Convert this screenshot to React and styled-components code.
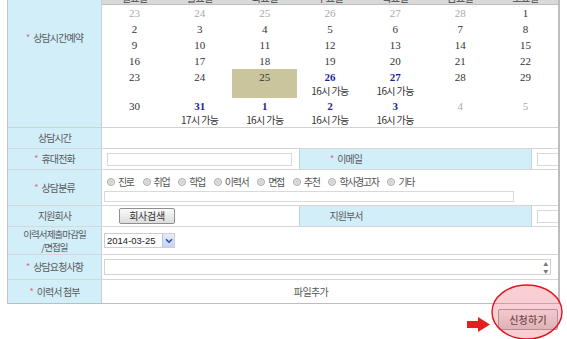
import styled, { createGlobalStyle } from 'styled-components'

const GlobalStyle = createGlobalStyle`
  html, body {
    margin: 0;
    padding: 0;
    background: #fff;
    overflow: hidden;
  }
  body {
    font-family: "Noto Sans CJK KR", "Noto Sans", sans-serif;
    color: #555;
  }
`

const days = ['일요일', '월요일', '화요일', '수요일', '목요일', '금요일', '토요일']

const weeks = [
  [{ d: 23, o: true }, { d: 24, o: true }, { d: 25, o: true }, { d: 26, o: true }, { d: 27, o: true }, { d: 28, o: true }, { d: 1 }],
  [{ d: 2 }, { d: 3 }, { d: 4 }, { d: 5 }, { d: 6 }, { d: 7 }, { d: 8 }],
  [{ d: 9 }, { d: 10 }, { d: 11 }, { d: 12 }, { d: 13 }, { d: 14 }, { d: 15 }],
  [{ d: 16 }, { d: 17 }, { d: 18 }, { d: 19 }, { d: 20 }, { d: 21 }, { d: 22 }],
  [{ d: 23 }, { d: 24 }, { d: 25, sel: true }, { d: 26, a: '16시 가능' }, { d: 27, a: '16시 가능' }, { d: 28 }, { d: 29 }],
  [{ d: 30 }, { d: 31, a: '17시 가능' }, { d: 1, a: '16시 가능' }, { d: 2, a: '16시 가능' }, { d: 3, a: '16시 가능' }, { d: 4, o: true }, { d: 5, o: true }],
]

const categories = ['진로', '취업', '학업', '이력서', '면접', '추천', '학사경고자', '기타']

function Req({ children }) {
  return (
    <>
      <Star>*</Star>
      {children}
    </>
  )
}

export default function App() {
  return (
    <>
      <GlobalStyle />
      <Page>
        <Frame>
          <CalendarRow>
            <Label $tall>
              <Req>상담시간예약</Req>
            </Label>
            <Calendar>
              {days.map((d) => (
                <DayHead key={d}>{d}</DayHead>
              ))}
              {weeks.flat().map((c, i) => (
                <DayCell key={i} $sel={c.sel}>
                  <DayNum $other={c.o} $avail={!!c.a}>{c.d}</DayNum>
                  {c.a && <Avail>{c.a}</Avail>}
                </DayCell>
              ))}
            </Calendar>
          </CalendarRow>

          <Row $h={21}>
            <Label>상담시간</Label>
            <Value $span />
          </Row>

          <Row $h={21}>
            <Label>
              <Req>휴대전화</Req>
            </Label>
            <Value>
              <TextInput $w={183} $ml={5} />
            </Value>
            <Label $side>
              <Req>이메일</Req>
            </Label>
            <Value $clip>
              <TextInput $w={60} $ml={5} />
            </Value>
          </Row>

          <Row $h={36}>
            <Label>
              <Req>상담분류</Req>
            </Label>
            <Value $span $stack>
              <Radios>
                {categories.map((c) => (
                  <RadioItem key={c}>
                    <RadioDot />
                    {c}
                  </RadioItem>
                ))}
              </Radios>
              <TextInput $w={408} $ml={2} $h={9} />
            </Value>
          </Row>

          <Row $h={21}>
            <Label>지원회사</Label>
            <Value>
              <GrayButton $ml={17}>회사검색</GrayButton>
            </Value>
            <Label $side>지원부서</Label>
            <Value $clip>
              <TextInput $w={60} $ml={5} />
            </Value>
          </Row>

          <Row $h={28}>
            <Label $lines>
              이력서제출마감일
              <br />
              /면접일
            </Label>
            <Value $span>
              <FakeSelect>
                <span>2014-03-25</span>
                <SelectArrow>
                  <svg width="8" height="6" viewBox="0 0 8 6">
                    <path d="M1 1.2 L4 4.2 L7 1.2" fill="none" stroke="#2b4c9c" strokeWidth="1.6" />
                  </svg>
                </SelectArrow>
              </FakeSelect>
            </Value>
          </Row>

          <Row $h={25}>
            <Label>
              <Req>상담요청사항</Req>
            </Label>
            <Value $span>
              <TextArea>
                <Spinner>
                  <span>▲</span>
                  <span>▼</span>
                </Spinner>
              </TextArea>
            </Value>
          </Row>

          <Row $h={23} $last>
            <Label>
              <Req>이력서 첨부</Req>
            </Label>
            <Value $span $center>
              파일추가
            </Value>
          </Row>
        </Frame>

        <Actions>
          <SubmitButton>신청하기</SubmitButton>
          <Annotation width="100" height="58" viewBox="0 0 100 58">
            <ellipse cx="62" cy="29" rx="35" ry="27" fill="rgba(236,110,122,0.33)" stroke="#e3121f" strokeWidth="1.4" />
            <polygon points="2,38 13,38 13,34 25,41.5 13,49 13,45 2,45" fill="#e3201f" />
          </Annotation>
        </Actions>
      </Page>
    </>
  )
}

const Page = styled.div`
  width: 567px;
  height: 350px;
  padding-left: 7px;
  margin-top: -11px;
  box-sizing: border-box;
`

const Frame = styled.div`
  width: 553px;
  box-sizing: border-box;
  border-left: 1px solid #c4c4c4;
  border-right: 2px solid #bdbdbd;
  border-bottom: 1px solid #bdbdbd;
  overflow: hidden;
`

const CalendarRow = styled.div`
  display: grid;
  grid-template-columns: 94px 1fr;
  border-bottom: 1px solid #d2d2d2;
`

const Row = styled.div`
  display: grid;
  grid-template-columns: 94px 197px 233px 1fr;
  box-sizing: border-box;
  height: ${(p) => p.$h}px;
  border-bottom: ${(p) => (p.$last ? 'none' : '1px solid #d6d6d6')};
`

const Label = styled.div`
  background: #d2eef9;
  border-right: 1px solid #c2d4db;
  border-left: ${(p) => (p.$side ? '1px solid #c2d4db' : 'none')};
  display: flex;
  align-items: center;
  justify-content: center;
  text-align: center;
  font-size: ${(p) => (p.$lines ? '9.5px' : '10px')};
  letter-spacing: -0.9px;
  line-height: ${(p) => (p.$lines ? '13px' : '12px')};
  color: #5a5a5a;
  padding-bottom: ${(p) => (p.$tall ? '41px' : '0')};
  padding-right: ${(p) => (p.$side ? '139px' : '0')};
  white-space: nowrap;
`

const Star = styled.span`
  color: #e0628c;
  margin-right: 4px;
  font-size: 9px;
`

const Value = styled.div`
  grid-column: ${(p) => (p.$span ? 'span 3' : 'auto')};
  display: flex;
  flex-direction: ${(p) => (p.$stack ? 'column' : 'row')};
  align-items: ${(p) => (p.$stack ? 'flex-start' : 'center')};
  justify-content: ${(p) => (p.$stack ? 'flex-start' : p.$center ? 'center' : 'flex-start')};
  gap: ${(p) => (p.$stack ? '3px' : '0')};
  overflow: ${(p) => (p.$clip ? 'hidden' : 'visible')};
  padding-top: ${(p) => (p.$stack ? '6px' : '0')};
  padding-right: ${(p) => (p.$center ? '38px' : '0')};
  font-size: 10px;
  letter-spacing: -0.6px;
  color: #555;
`

const Calendar = styled.div`
  display: grid;
  grid-template-columns: repeat(7, 1fr);
`

const DayHead = styled.div`
  height: 15px;
  display: flex;
  align-items: flex-end;
  justify-content: center;
  background: #d9d9d9;
  border-bottom: 1px solid #bdbdbd;
  font-size: 10px;
  line-height: 12px;
  color: #444;
  letter-spacing: -0.6px;
`

const DayCell = styled.div`
  background: ${(p) => (p.$sel ? '#cac59c' : '#fff')};
  padding: 1.5px 0;
  text-align: center;
  line-height: 13px;
`

const DayNum = styled.div`
  font-family: "Liberation Serif", "DejaVu Serif", serif;
  font-size: 11px;
  font-weight: ${(p) => (p.$avail ? 700 : 400)};
  color: ${(p) => (p.$avail ? '#1b1f9e' : p.$other ? '#a9a9a9' : '#333')};
`

const Avail = styled.div`
  font-size: 10px;
  letter-spacing: -0.6px;
  color: #333;
`

const TextInput = styled.div`
  width: ${(p) => p.$w}px;
  height: ${(p) => p.$h || 11}px;
  margin-left: ${(p) => p.$ml || 0}px;
  border: 1px solid #d9d9d9;
  background: #fff;
  flex-shrink: 0;
`

const Radios = styled.div`
  display: flex;
  gap: 9px;
  padding-left: 5px;
  font-size: 10px;
  letter-spacing: -1.4px;
  color: #555;
  line-height: 12px;
`

const RadioItem = styled.span`
  display: inline-flex;
  align-items: center;
  gap: 3px;
`

const RadioDot = styled.span`
  width: 6px;
  height: 6px;
  border-radius: 50%;
  border: 1px solid #a8a8a8;
  background: radial-gradient(circle, #d4d4d4 35%, #efefef 70%);
`

const GrayButton = styled.div`
  margin-left: ${(p) => p.$ml || 0}px;
  width: 54px;
  height: 14px;
  border: 1px solid #8f8f8f;
  border-radius: 2px;
  background: linear-gradient(#fbfbfb, #dcdcdc);
  font-size: 10px;
  line-height: 14px;
  text-align: center;
  color: #333;
  letter-spacing: -0.3px;
`

const FakeSelect = styled.div`
  margin-left: 2px;
  width: 71px;
  height: 15px;
  box-sizing: border-box;
  border: 1px solid #cfcfcf;
  display: flex;
  align-items: center;
  justify-content: space-between;
  padding-left: 2px;
  font-family: "Liberation Sans", Arial, sans-serif;
  font-size: 9.5px;
  letter-spacing: 0;
  color: #222;
`

const SelectArrow = styled.span`
  width: 11px;
  height: 13px;
  display: flex;
  align-items: center;
  justify-content: center;
  background: linear-gradient(#e6ecfa, #c7d4f1);
  border-left: 1px solid #b3c3e6;
`

const TextArea = styled.div`
  margin-left: 2px;
  width: 447px;
  height: 16px;
  box-sizing: border-box;
  border: 1px solid #d3d3d3;
  display: flex;
  justify-content: flex-end;
`

const Spinner = styled.div`
  width: 9px;
  display: flex;
  flex-direction: column;
  align-items: center;
  font-size: 5px;
  line-height: 7px;
  color: #777;
`

const Actions = styled.div`
  position: relative;
  width: 553px;
  display: flex;
  justify-content: flex-end;
  padding-top: 5px;
  padding-right: 2px;
  box-sizing: border-box;
`

const SubmitButton = styled.div`
  width: 60px;
  height: 21px;
  box-sizing: border-box;
  border: 1px solid #9d9d9d;
  border-radius: 2px;
  background: linear-gradient(#f7f7f7, #d5d5d5);
  font-size: 10px;
  line-height: 19px;
  text-align: center;
  color: #333;
  font-weight: 500;
  letter-spacing: 0.2px;
`

const Annotation = styled.svg`
  position: absolute;
  left: 458px;
  top: -21px;
  pointer-events: none;
`
